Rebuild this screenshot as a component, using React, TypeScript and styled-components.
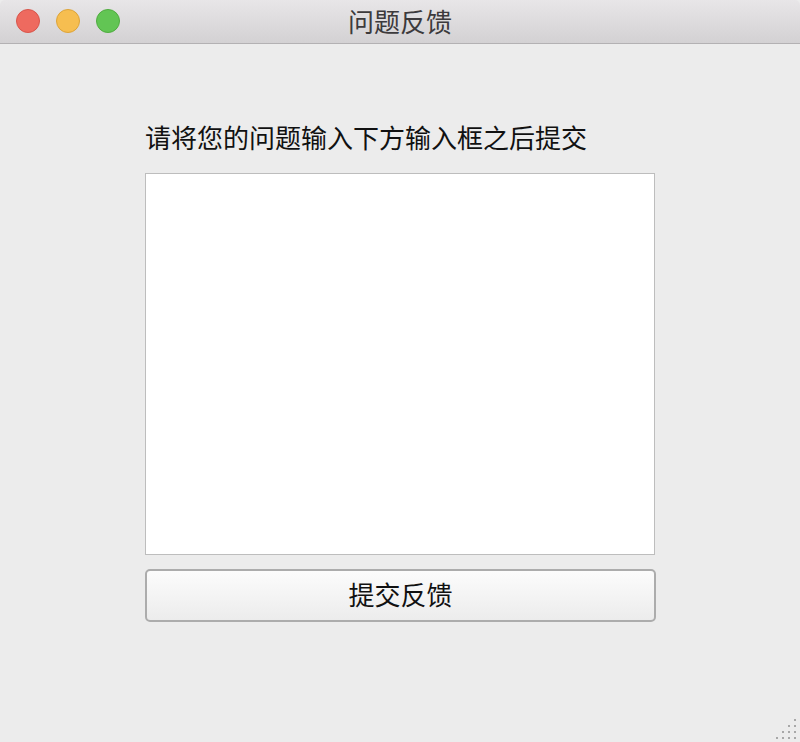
import React from "react";
import styled, { createGlobalStyle } from "styled-components";

const Global = createGlobalStyle`
  html, body { margin: 0; padding: 0; background: #ececec; }
  body { font-family: "Noto Sans CJK SC", "Noto Sans", sans-serif; }
  * { box-sizing: border-box; }
`;

const Window = styled.div`
  width: 800px;
  height: 742px;
  background: #ececec;
  display: flex;
  flex-direction: column;
  position: relative;
  border-radius: 5px 5px 0 0;
  overflow: hidden;
`;

const TitleBar = styled.div`
  height: 44px;
  flex: none;
  background: linear-gradient(#e8e6e8, #d3d1d3);
  border-bottom: 1px solid #b3b1b3;
  display: grid;
  grid-template-columns: 1fr auto 1fr;
  align-items: center;
  padding: 0 16px;
`;

const Lights = styled.div`
  display: flex;
  gap: 16px;
  align-items: center;
  margin-top: -1px;
`;

const Light = styled.span<{ $fill: string; $edge: string }>`
  width: 24px;
  height: 24px;
  border-radius: 50%;
  background: ${(p) => p.$fill};
  border: 1px solid ${(p) => p.$edge};
`;

const Title = styled.div`
  font-size: 26px;
  color: #3c3a3c;
  line-height: 30px;
  margin-top: -2px;
`;

const Content = styled.div`
  flex: 1;
  display: flex;
  flex-direction: column;
  align-items: center;
  padding-top: 76px;
`;

const Form = styled.div`
  width: 510px;
  display: flex;
  flex-direction: column;
`;

const Label = styled.div`
  font-size: 26px;
  line-height: 34px;
  color: #111;
  padding-left: 0;
  margin-bottom: 19px;
`;

const TextArea = styled.textarea`
  width: 510px;
  height: 382px;
  background: #fff;
  border: 1px solid #bdbdbd;
  resize: none;
  outline: none;
  margin: 0;
  font-family: inherit;
  font-size: 16px;
  display: block;
`;

const Button = styled.button`
  margin-top: 14px;
  width: 511px;
  height: 53px;
  border: 2px solid #acacac;
  border-radius: 5px;
  background: linear-gradient(#fcfcfc, #ececec);
  font-family: inherit;
  font-size: 26px;
  color: #111;
  line-height: 1;
  padding: 0 0 3px;
  cursor: pointer;
`;

const Grip = styled.svg`
  position: absolute;
  right: 0;
  bottom: 0;
`;

export default function App() {
  const dots: [number, number][] = [
    [18, 3], [12, 9], [18, 9], [6, 15], [12, 15], [18, 15], [0, 21], [6, 21], [12, 21], [18, 21],
  ];
  return (
    <>
      <Global />
      <Window>
        <TitleBar>
          <Lights>
            <Light $fill="#ee6a5f" $edge="#d8554b" />
            <Light $fill="#f6be50" $edge="#dda439" />
            <Light $fill="#62c554" $edge="#50ac40" />
          </Lights>
          <Title>问题反馈</Title>
          <div />
        </TitleBar>
        <Content>
          <Form>
            <Label>请将您的问题输入下方输入框之后提交</Label>
            <TextArea />
            <Button>提交反馈</Button>
          </Form>
        </Content>
        <Grip width="26" height="26" viewBox="0 0 26 26">
          {dots.map(([x, y], i) => (
            <rect key={i} x={x + 2} y={y} width="2" height="2" fill="#a8a8a8" />
          ))}
        </Grip>
      </Window>
    </>
  );
}
